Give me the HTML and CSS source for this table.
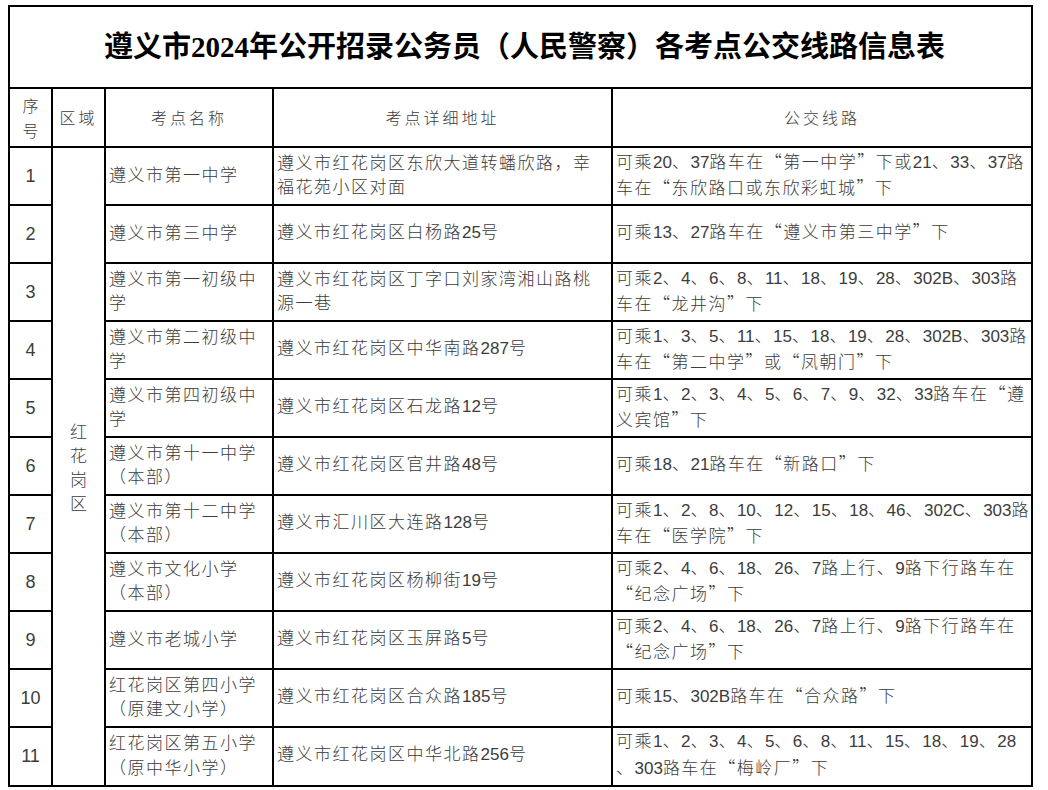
FILE: index.html
```html
<!DOCTYPE html>
<html lang="zh-CN">
<head>
<meta charset="utf-8">
<title>遵义市2024年公开招录公务员（人民警察）各考点公交线路信息表</title>
<link rel="stylesheet" href="styles.css">
</head>
<body>
<table class="sheet">
  <colgroup>
    <col class="c-seq">
    <col class="c-area">
    <col class="c-name">
    <col class="c-addr">
    <col class="c-bus">
  </colgroup>
  <tr class="title-row">
    <td colspan="5" class="title">遵义市2024年公开招录公务员（人民警察）各考点公交线路信息表</td>
  </tr>
  <tr class="head-row">
    <th class="h-seq">序<br>号</th>
    <th>区域</th>
    <th>考点名称</th>
    <th>考点详细地址</th>
    <th>公交线路</th>
  </tr>
  <tr class="row">
    <td class="seq">1</td>
    <td class="area" rowspan="11">红<br>花<br>岗<br>区</td>
    <td>遵义市第一中学</td>
    <td>遵义市红花岗区东欣大道转蟠欣路，幸<br>福花苑小区对面</td>
    <td>可乘<span class="n">20</span>、<span class="n">37</span>路车在“第一中学”下或<span class="n">21</span>、<span class="n">33</span>、<span class="n">37</span>路<br>车在“东欣路口或东欣彩虹城”下</td>
  </tr>
  <tr class="row">
    <td class="seq">2</td>
    <td>遵义市第三中学</td>
    <td>遵义市红花岗区白杨路<span class="n">25</span>号</td>
    <td>可乘<span class="n">13</span>、<span class="n">27</span>路车在“遵义市第三中学”下</td>
  </tr>
  <tr class="row">
    <td class="seq">3</td>
    <td>遵义市第一初级中<br>学</td>
    <td>遵义市红花岗区丁字口刘家湾湘山路桃<br>源一巷</td>
    <td>可乘<span class="n">2</span>、<span class="n">4</span>、<span class="n">6</span>、<span class="n">8</span>、<span class="n">11</span>、<span class="n">18</span>、<span class="n">19</span>、<span class="n">28</span>、<span class="n">302B</span>、<span class="n">303</span>路<br>车在“龙井沟”下</td>
  </tr>
  <tr class="row">
    <td class="seq">4</td>
    <td>遵义市第二初级中<br>学</td>
    <td>遵义市红花岗区中华南路<span class="n">287</span>号</td>
    <td>可乘<span class="n">1</span>、<span class="n">3</span>、<span class="n">5</span>、<span class="n">11</span>、<span class="n">15</span>、<span class="n">18</span>、<span class="n">19</span>、<span class="n">28</span>、<span class="n">302B</span>、<span class="n">303</span>路<br>车在“第二中学”或“凤朝门”下</td>
  </tr>
  <tr class="row">
    <td class="seq">5</td>
    <td>遵义市第四初级中<br>学</td>
    <td>遵义市红花岗区石龙路<span class="n">12</span>号</td>
    <td>可乘<span class="n">1</span>、<span class="n">2</span>、<span class="n">3</span>、<span class="n">4</span>、<span class="n">5</span>、<span class="n">6</span>、<span class="n">7</span>、<span class="n">9</span>、<span class="n">32</span>、<span class="n">33</span>路车在“遵<br>义宾馆”下</td>
  </tr>
  <tr class="row">
    <td class="seq">6</td>
    <td>遵义市第十一中学<br>（本部）</td>
    <td>遵义市红花岗区官井路<span class="n">48</span>号</td>
    <td>可乘<span class="n">18</span>、<span class="n">21</span>路车在“新路口”下</td>
  </tr>
  <tr class="row">
    <td class="seq">7</td>
    <td>遵义市第十二中学<br>（本部）</td>
    <td>遵义市汇川区大连路<span class="n">128</span>号</td>
    <td>可乘<span class="n">1</span>、<span class="n">2</span>、<span class="n">8</span>、<span class="n">10</span>、<span class="n">12</span>、<span class="n">15</span>、<span class="n">18</span>、<span class="n">46</span>、<span class="n">302C</span>、<span class="n">303</span>路<br>车在“医学院”下</td>
  </tr>
  <tr class="row">
    <td class="seq">8</td>
    <td>遵义市文化小学<br>（本部）</td>
    <td>遵义市红花岗区杨柳街<span class="n">19</span>号</td>
    <td>可乘<span class="n">2</span>、<span class="n">4</span>、<span class="n">6</span>、<span class="n">18</span>、<span class="n">26</span>、<span class="n">7</span>路上行、<span class="n">9</span>路下行路车在<br>“纪念广场”下</td>
  </tr>
  <tr class="row">
    <td class="seq">9</td>
    <td>遵义市老城小学</td>
    <td>遵义市红花岗区玉屏路<span class="n">5</span>号</td>
    <td>可乘<span class="n">2</span>、<span class="n">4</span>、<span class="n">6</span>、<span class="n">18</span>、<span class="n">26</span>、<span class="n">7</span>路上行、<span class="n">9</span>路下行路车在<br>“纪念广场”下</td>
  </tr>
  <tr class="row">
    <td class="seq">10</td>
    <td>红花岗区第四小学<br>（原建文小学）</td>
    <td>遵义市红花岗区合众路<span class="n">185</span>号</td>
    <td>可乘<span class="n">15</span>、<span class="n">302B</span>路车在“合众路”下</td>
  </tr>
  <tr class="row">
    <td class="seq">11</td>
    <td>红花岗区第五小学<br>（原中华小学）</td>
    <td>遵义市红花岗区中华北路<span class="n">256</span>号</td>
    <td>可乘<span class="n">1</span>、<span class="n">2</span>、<span class="n">3</span>、<span class="n">4</span>、<span class="n">5</span>、<span class="n">6</span>、<span class="n">8</span>、<span class="n">11</span>、<span class="n">15</span>、<span class="n">18</span>、<span class="n">19</span>、<span class="n">28</span><br>、<span class="n">303</span>路车在“梅岭厂”下</td>
  </tr>
</table>
</body>
</html>
```
FILE: styles.css
```css
html, body {
  margin: 0;
  background: #fff;
}
body {
  padding: 5px 8px 0 8px;
  font-family: "Noto Sans CJK SC", sans-serif;
  color: #3c3c3c;
}
.sheet {
  border-collapse: collapse;
  table-layout: fixed;
  width: 1025px;
}
.c-seq { width: 43px; }
.c-area { width: 53px; }
.c-name { width: 168px; }
.c-addr { width: 339px; }
.c-bus { width: 420px; }

.sheet td,
.sheet th {
  border: 2px solid #000;
  padding: 0 0 4px 3px;
  vertical-align: middle;
  text-align: left;
  font-weight: 300;
  font-size: 17px;
  line-height: 24.5px;
  letter-spacing: 1.5px;
  white-space: nowrap;
  overflow: hidden;
}
.title-row { height: 82px; }
.head-row { height: 59px; }
.row { height: 58px; }

.sheet td.title {
  text-align: center;
  padding: 0 0 0 8px;
  font-family: "Liberation Serif", "Noto Sans CJK SC", serif;
  font-weight: bold;
  font-size: 29px;
  letter-spacing: 0;
  color: #000;
}
.sheet th {
  text-align: center;
  padding: 0;
  font-size: 16px;
  letter-spacing: 3px;
}
.sheet th.h-seq {
  line-height: 25px;
  letter-spacing: 0;
}
.sheet td.seq {
  text-align: center;
  padding: 0;
  font-family: "Liberation Sans", sans-serif;
  font-weight: normal;
  font-size: 18px;
  letter-spacing: 0;
}
.sheet td.area {
  text-align: center;
  padding: 0;
  line-height: 24px;
  letter-spacing: 0;
}
.n {
  font-family: "Liberation Sans", sans-serif;
  font-weight: normal;
  font-size: 17px;
  letter-spacing: 0;
}
```
